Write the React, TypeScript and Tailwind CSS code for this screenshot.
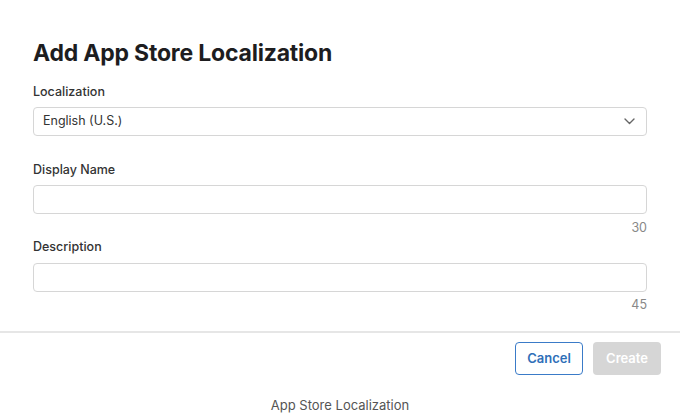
import React from "react";

export default function App() {
  return (
    <div className="w-[680px] h-[414px] bg-white flex flex-col" style={{ fontFamily: "Inter, 'Noto Sans', sans-serif" }}>
      <div className="h-[384px] flex flex-col">
        <div className="px-[33px] pt-[38px] flex flex-col">
          <h1 className="text-[23px] leading-[30px] font-bold text-[#1d1d1f] tracking-[-0.2px]">Add App Store Localization</h1>
          <label className="mt-[16px] text-[12.5px] leading-[16px] font-medium text-[#333]">Localization</label>
          <div className="mt-[7px] h-[29px] border border-[#d6d6d6] rounded-[4px] flex items-center justify-between pl-[9px] pr-[11px]">
            <span className="text-[12.5px] text-[#333]">English (U.S.)</span>
            <svg width="11" height="7" viewBox="0 0 11 7" fill="none">
              <path d="M1 1l4.5 4.5L10 1" stroke="#666" strokeWidth="1.4" strokeLinecap="round" strokeLinejoin="round" />
            </svg>
          </div>
          <label className="mt-[26px] text-[12.5px] leading-[16px] font-medium text-[#333]">Display Name</label>
          <div className="mt-[7px] h-[29px] border border-[#d6d6d6] rounded-[4px]" />
          <div className="mt-[6px] text-right text-[12.5px] leading-[16px] text-[#888]">30</div>
          <label className="mt-[3px] text-[12.5px] leading-[16px] font-medium text-[#333]">Description</label>
          <div className="mt-[8px] h-[29px] border border-[#d6d6d6] rounded-[4px]" />
          <div className="mt-[5px] text-right text-[12.5px] leading-[16px] text-[#888]">45</div>
        </div>
        <div className="mt-[18px] h-[2px] bg-[#e6e6e6]" />
        <div className="flex justify-end gap-[10px] pr-[19px] pt-[9px]">
          <button className="w-[68px] h-[33px] rounded-[4px] border border-[#3a7bc8] text-[#2f6fb8] text-[13px] font-semibold bg-white">Cancel</button>
          <button className="w-[68px] h-[33px] rounded-[4px] bg-[#d6d6d6] text-white text-[13px] font-semibold">Create</button>
        </div>
      </div>
      <div className="text-center text-[13px] text-[#555] mt-[13px] leading-[16px]">App Store Localization</div>
    </div>
  );
}
